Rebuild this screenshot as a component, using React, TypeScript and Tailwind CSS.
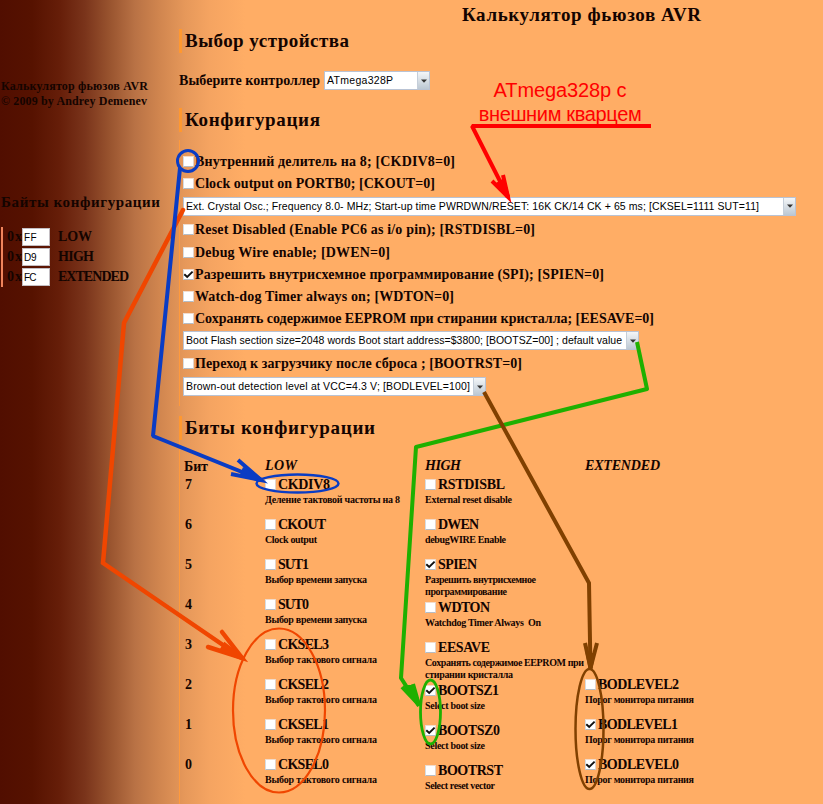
import { useLayoutEffect, useRef, useState } from "react";

/** Text whose tracking is computed so that it spans exactly `w` pixels. */
function Fit({ w, children, className = "" }: { w: number; children: string; className?: string }) {
  const ref = useRef<HTMLSpanElement>(null);
  const [spacing, setSpacing] = useState(0);
  useLayoutEffect(() => {
    const el = ref.current;
    if (!el) return;
    el.style.letterSpacing = "0px";
    const natural = el.getBoundingClientRect().width;
    const next = (w - natural) / Math.max(1, children.length - 1);
    el.style.letterSpacing = `${next}px`;
    setSpacing(next);
  }, [w, children]);
  return (
    <span ref={ref} className={`inline-block shrink-0 whitespace-pre ${className}`} style={{ letterSpacing: `${spacing}px` }}>
      {children}
    </span>
  );
}

function Box({ checked = false }: { checked?: boolean }) {
  return (
    <span className="flex h-[11px] w-[11px] shrink-0 border border-t-[#f3dccb] border-r-[#e2d3ca] border-b-[#b5bdc6] border-l-[#d5dce2] bg-white">
      {checked && (
        <svg viewBox="0 0 9 9" className="h-[9px] w-[9px] overflow-visible" fill="none" stroke="#111" strokeWidth="1.9">
          <path d="M0.3 4.2 L3.2 7 L8.6 1.6" />
        </svg>
      )}
    </span>
  );
}

function Heading({ w, children, className = "" }: { w: number; children: string; className?: string }) {
  return (
    <h2 className={`flex h-6 items-center border-l-[3px] border-[#ff9830] pl-[3px] text-[19px] leading-6 font-bold ${className}`}>
      <Fit w={w}>{children}</Fit>
    </h2>
  );
}

function Select({ width, w, children }: { width: string; w: number; children: string }) {
  return (
    <div className={`flex h-[19px] items-stretch border border-[#b9c3d4] bg-white ${width}`}>
      <span className="flex flex-1 items-center pl-[2px] font-['Liberation_Sans',Arial,sans-serif] text-[10.5px] leading-none font-normal text-black">
        <Fit w={w}>{children}</Fit>
      </span>
      <span className="flex w-3 items-center justify-center border-l border-[#c5ced9] bg-linear-to-b from-[#f4f6f8] to-[#bcc8d3]">
        <svg width="6" height="4" viewBox="0 0 6 4"><path d="M0 0.5H6L3 3.8Z" fill="#333" /></svg>
      </span>
    </div>
  );
}

function Option({ h, w, checked, children }: { h: string; w: number; checked?: boolean; children: string }) {
  return (
    <label className={`flex items-center gap-px text-[14px] font-bold ${h}`}>
      <Box checked={checked} />
      <Fit w={w} className="pt-px">{children}</Fit>
    </label>
  );
}

type Bit = { name: string; w: number; lines: [string, number][]; checked?: boolean; tall?: boolean };

const select: [string, number][] = [["Выбор тактового сигнала", 112]];
const startup: [string, number][] = [["Выбор времени запуска", 102]];
const monitor: [string, number][] = [["Порог монитора питания", 109]];

const low: Bit[] = [
  { name: "CKDIV8", w: 52, lines: [["Деление тактовой частоты на 8", 135]] },
  { name: "CKOUT", w: 48, lines: [["Clock output", 52]] },
  { name: "SUT1", w: 31, lines: startup },
  { name: "SUT0", w: 31, lines: startup },
  { name: "CKSEL3", w: 51, lines: select },
  { name: "CKSEL2", w: 51, lines: select },
  { name: "CKSEL1", w: 51, lines: select },
  { name: "CKSEL0", w: 51, lines: select },
];

const high: Bit[] = [
  { name: "RSTDISBL", w: 67, lines: [["External reset disable", 87]] },
  { name: "DWEN", w: 41, lines: [["debugWIRE Enable", 81]] },
  { name: "SPIEN", w: 39, checked: true, tall: true, lines: [["Разрешить внутрисхемное", 111], ["программирование", 82]] },
  { name: "WDTON", w: 52, lines: [["Watchdog Timer Always  On", 116]] },
  { name: "EESAVE", w: 52, tall: true, lines: [["Сохранять содержимое EEPROM при", 159], ["стирании кристалла", 88]] },
  { name: "BOOTSZ1", w: 61, checked: true, lines: [["Select boot size", 60]] },
  { name: "BOOTSZ0", w: 62, checked: true, lines: [["Select boot size", 60]] },
  { name: "BOOTRST", w: 65, lines: [["Select reset vector", 70]] },
];

const extended: Bit[] = [
  { name: "BODLEVEL2", w: 81, lines: monitor },
  { name: "BODLEVEL1", w: 80, checked: true, lines: monitor },
  { name: "BODLEVEL0", w: 81, checked: true, lines: monitor },
];

function BitColumn({ title, w, bits, className }: { title: string; w: number; bits: Bit[]; className: string }) {
  return (
    <div className={className}>
      <div className="flex h-[18px] items-center pt-0.5 text-[14px] font-bold italic"><Fit w={w}>{title}</Fit></div>
      <div className={bits.length === 3 ? "pt-[200px]" : ""}>
        {bits.map((b) => (
          <div key={b.name} className={b.tall ? "h-[43px]" : "h-10"}>
            <label className="flex h-5 items-center gap-[2px] text-[14px] font-bold">
              <Box checked={b.checked} />
              <Fit w={b.w} className="pt-0.5">{b.name}</Fit>
            </label>
            {b.lines.map(([t, tw]) => (
              <div key={t} className="flex h-3 items-center text-[10px] leading-3 font-bold"><Fit w={tw}>{t}</Fit></div>
            ))}
          </div>
        ))}
      </div>
    </div>
  );
}

const bytes: [string, string, number][] = [["FF", "LOW", 34], ["D9", "HIGH", 36], ["FC", "EXTENDED", 71]];

function Sidebar() {
  return (
    <aside className="w-[179px] shrink-0 pt-[79px] pl-px">
      <div className="text-[12px] leading-[15px] font-bold">
        <Fit w={147} className="h-[15px] align-top">Калькулятор фьюзов AVR</Fit>
        <Fit w={146} className="h-[15px] align-top">© 2009 by Andrey Demenev</Fit>
      </div>
      <h3 className="mt-[83px] flex h-5 items-center text-[15px] font-bold"><Fit w={159}>Байты конфигурации</Fit></h3>
      <div className="mt-[15px] border-l-2 border-[#f0845c]">
        {bytes.map(([value, name, w]) => (
          <div key={name} className="flex h-5 items-center text-[14px] font-bold">
            <span className="w-[19px] pl-1"><Fit w={15}>0x</Fit></span>
            <span className="flex h-[18px] w-7 items-center border border-[#c3bdc2] bg-white pl-px pt-px font-['Liberation_Sans',Arial,sans-serif] text-[10px] font-normal text-black">
              <Fit w={12.5}>{value}</Fit>
            </span>
            <Fit w={w} className="ml-2">{name}</Fit>
          </div>
        ))}
      </div>
    </aside>
  );
}

function Annotations() {
  return (
    <svg className="pointer-events-none absolute inset-0" width="823" height="804" viewBox="0 0 823 804" fill="none">
      <g stroke="#f04600" strokeWidth="4.5" strokeLinecap="round">
        <path d="M183 210L124 323L103 563L242 658" />
        <path d="M222 632L242 658L208 647" />
        <path d="M225 645L242 658L222 650Z" fill="#f04600" />
        <ellipse cx="279" cy="710.5" rx="46" ry="82" strokeWidth="2.2" />
      </g>
      <g stroke="#0a3cc4" strokeWidth="4">
        <path d="M180 168L153 436L262 480" strokeLinejoin="bevel" />
        <path d="M238 460L261 480L231 474" />
        <path d="M244 470L261 480L242 475Z" fill="#0a3cc4" />
        <circle cx="188" cy="161" r="10.5" strokeWidth="3" />
        <ellipse cx="297.5" cy="483.5" rx="41" ry="9" strokeWidth="2.5" />
      </g>
      <g stroke="#1eb000" strokeWidth="4">
        <path d="M637 342L647 389L416 447L401 678L419 706" strokeLinejoin="round" />
        <path d="M402 687L419 705L413 684" />
        <path d="M407 687L419 705L412 687Z" fill="#1eb000" />
        <ellipse cx="430.5" cy="712" rx="10" ry="32" strokeWidth="2.8" />
      </g>
      <g stroke="#804000" strokeWidth="4">
        <path d="M484 392L589 583L590.5 670" />
        <path d="M585 643L590.5 668L597 643" />
        <path d="M588 655L590.5 668L593 655Z" fill="#804000" />
        <ellipse cx="589.5" cy="729" rx="14" ry="60" strokeWidth="2.5" />
      </g>
      <g stroke="#ff0000" strokeWidth="4">
        <path d="M651 126H472L508 197" strokeLinejoin="bevel" />
        <path d="M492 181L508 197L503 175" />
        <path d="M498 184L508 197L503 181Z" fill="#ff0000" />
      </g>
    </svg>
  );
}

export default function App() {
  return (
    <div className="relative flex h-[804px] w-[823px] overflow-hidden bg-[linear-gradient(90deg,#510e00_0px,#561200_32px,#661e09_60px,#7a341b_85px,#99542f_110px,#b97245_135px,#d1864f_160px,#e6985a_185px,#f5a461_210px,#ffad65_245px)] font-['Liberation_Serif','Times_New_Roman',serif] leading-none text-[#140400]">
      <Sidebar />
      <main className="flex-1">
        <h1 className="flex h-[29px] items-center pl-[283px] text-[19px] font-bold"><Fit w={239}>Калькулятор фьюзов AVR</Fit></h1>
        <Heading w={164}>Выбор устройства</Heading>
        <div className="mt-[18px] flex h-[19px] items-center gap-1 text-[14px] font-bold">
          <Fit w={141}>Выберите контроллер</Fit>
          <Select width="w-[106px]" w={66}>ATmega328P</Select>
        </div>
        <Heading w={135} className="mt-[18px]">Конфигурация</Heading>
        <section className="mt-2 h-[266px] border-l border-[#ff9a3c] pt-[10px] pl-[3px]">
          <Option h="h-[22px]" w={260}>Внутренний делитель на 8; [CKDIV8=0]</Option>
          <Option h="h-[22px]" w={240}>Clock output on PORTB0; [CKOUT=0]</Option>
          <div className="flex h-6 items-center"><Select width="w-[613px]" w={573}>Ext. Crystal Osc.; Frequency 8.0- MHz; Start-up time PWRDWN/RESET: 16K CK/14 CK + 65 ms; [CKSEL=1111 SUT=11]</Select></div>
          <Option h="h-[23px]" w={340}>Reset Disabled (Enable PC6 as i/o pin); [RSTDISBL=0]</Option>
          <Option h="h-[22px]" w={195}>Debug Wire enable; [DWEN=0]</Option>
          <Option h="h-[22px]" w={409} checked>Разрешить внутрисхемное программирование (SPI); [SPIEN=0]</Option>
          <Option h="h-[22px]" w={259}>Watch-dog Timer always on; [WDTON=0]</Option>
          <Option h="h-[23px]" w={459}>Сохранять содержимое EEPROM при стирании кристалла; [EESAVE=0]</Option>
          <div className="flex h-[21px] items-center"><Select width="w-[456px]" w={436}>Boot Flash section size=2048 words Boot start address=$3800; [BOOTSZ=00] ; default value</Select></div>
          <Option h="h-[25px]" w={327}>Переход к загрузчику после сброса ; [BOOTRST=0]</Option>
          <div className="flex h-[21px] items-center"><Select width="w-[303px]" w={284}>Brown-out detection level at VCC=4.3 V; [BODLEVEL=100]</Select></div>
        </section>
        <Heading w={190} className="mt-[10px]">Биты конфигурации</Heading>
        <section className="flex h-[364px] border-l border-[#ff9a3c] pt-4 pl-1">
          <div className="w-[81px] text-[14px] font-bold">
            <div className="flex h-[18px] items-center pt-1"><Fit w={24}>Бит</Fit></div>
            {["7", "6", "5", "4", "3", "2", "1", "0"].map((n) => (
              <div key={n} className="flex h-10 items-start pt-1 pl-px">{n}</div>
            ))}
          </div>
          <BitColumn title="LOW" w={32} bits={low} className="w-40" />
          <BitColumn title="HIGH" w={36} bits={high} className="w-40" />
          <BitColumn title="EXTENDED" w={75} bits={extended} className="w-40" />
        </section>
      </main>
      <div className="absolute top-[78px] left-[472px] flex w-[176px] flex-col items-center font-['Liberation_Sans',Arial,sans-serif] text-[20px] leading-6 text-[#ff0000]">
        <Fit w={133}>ATmega328p с</Fit>
        <Fit w={163}>внешним кварцем</Fit>
      </div>
      <Annotations />
    </div>
  );
}
